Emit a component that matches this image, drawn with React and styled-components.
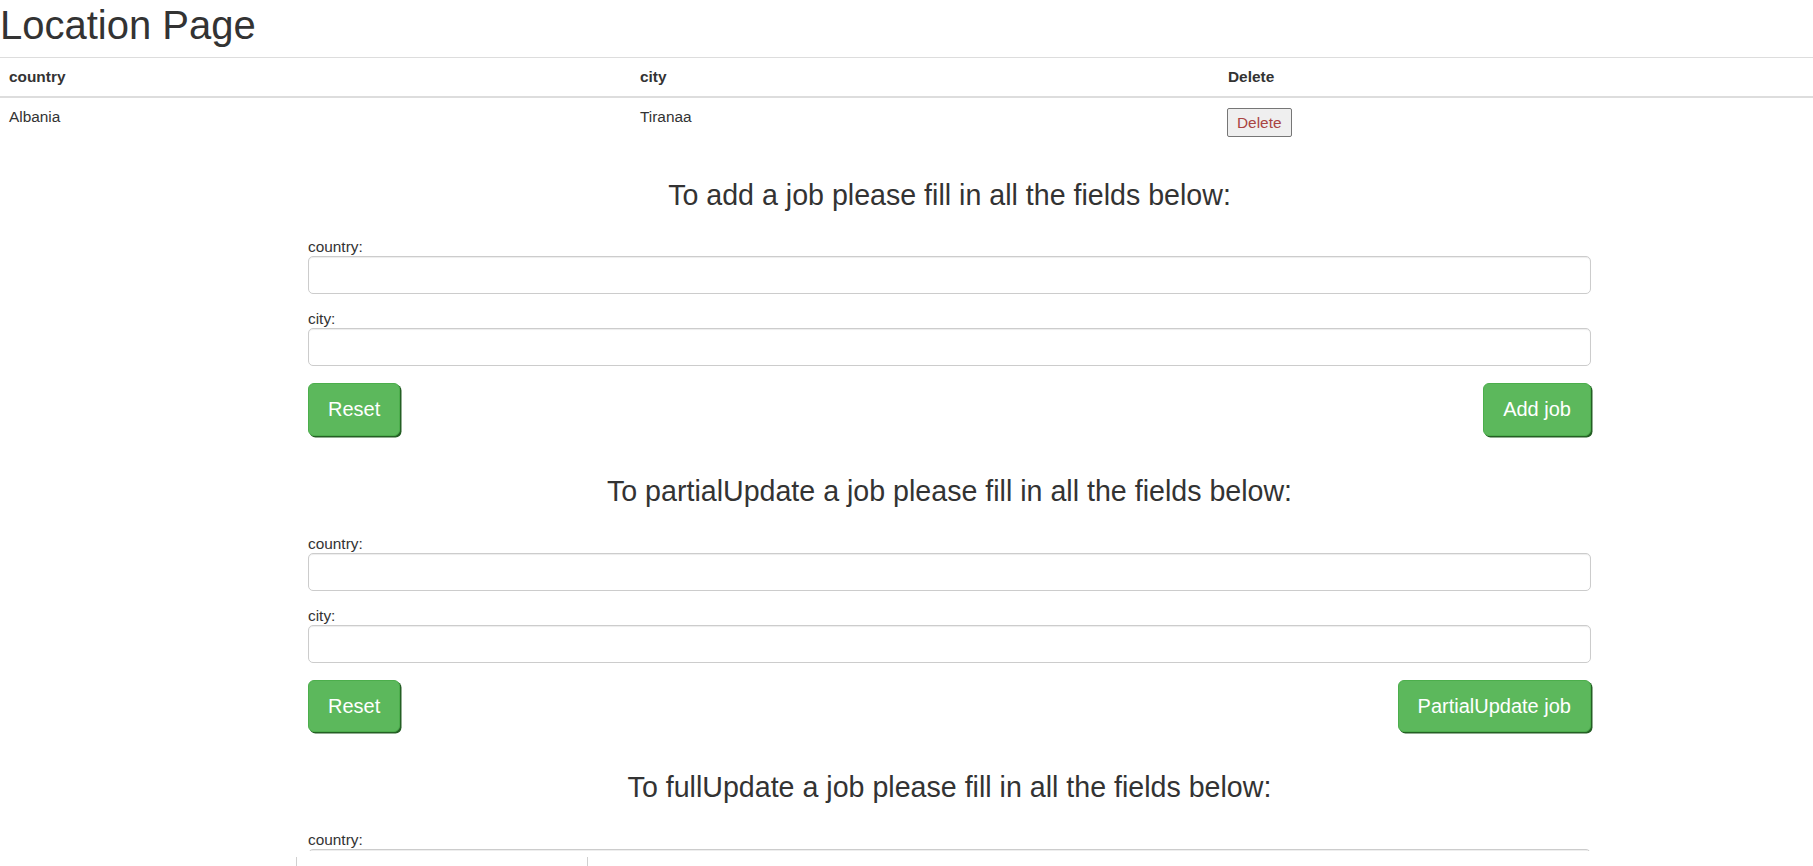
import React from "react";
import styled, { createGlobalStyle } from "styled-components";

const Global = createGlobalStyle`
  html, body { margin: 0; padding: 0; overflow: hidden; background: #fff; }
  body {
    font-family: "Liberation Sans", Arial, Helvetica, sans-serif;
    font-size: 15.4px;
    line-height: 1.42857;
    color: #333;
  }
  * { box-sizing: border-box; }
`;

const Page = styled.div`
  width: 100%;
`;

const Title = styled.h1`
  margin: 3px 0 10px;
  font-size: 40px;
  line-height: 1.1;
  font-weight: 500;
  color: #333;
`;

const Table = styled.table`
  width: 100%;
  border-collapse: collapse;
  border-spacing: 0;
`;

const HeadCell = styled.th`
  text-align: left;
  font-weight: bold;
  padding: 8px 8px 8px 9px;
  line-height: 22px;
  border-top: 1px solid #ddd;
  border-bottom: 2px solid #ddd;
  width: ${(p) => p.$w || "auto"};
`;

const Cell = styled.td`
  padding: 8px 8px 8px 9px;
  line-height: 22px;
  vertical-align: top;
`;

const DeleteButton = styled.button`
  font-family: "Liberation Sans", Arial, sans-serif;
  font-size: 15.4px;
  line-height: 21px;
  color: #a94442;
  background: #efefef;
  border: 1px solid #767676;
  border-radius: 2px;
  padding: 3px 9px;
  margin: 2px 0 0 -1px;
  cursor: pointer;
`;

const Forms = styled.div`
  margin: 35px 0 0 308px;
  width: 1283px;
`;

const Section = styled.section`
  padding-bottom: 40px;
`;

const SectionTitle = styled.h3`
  margin: 0 0 27px;
  font-size: 28.6px;
  line-height: 1.1;
  font-weight: 500;
  text-align: center;
  color: #333;
`;

const Field = styled.div`
  position: relative;
  margin-bottom: ${(p) => (p.$last ? "17px" : "16px")};
`;

const Label = styled.label`
  display: block;
  font-size: 15.4px;
  line-height: normal;
  color: #333;
`;

const Input = styled.input`
  display: block;
  width: 100%;
  height: 38px;
  padding: 6px 12px;
  font-size: 15.4px;
  font-family: "Liberation Sans", Arial, sans-serif;
  color: #555;
  background: #fff;
  border: 1px solid #ccc;
  border-radius: 5px;
  box-shadow: inset 0 1px 1px rgba(0, 0, 0, 0.075);
  outline: none;
`;

const Buttons = styled.div`
  display: flex;
  justify-content: space-between;
  align-items: center;
`;

const GreenButton = styled.button`
  font-family: "Liberation Sans", Arial, sans-serif;
  font-size: 20px;
  line-height: 26.7px;
  color: #fff;
  background: #5cb85c;
  border: 1px solid #4cae4c;
  border-radius: 6px;
  padding: 12px 19px;
  box-shadow: 1.5px 1.5px 0 #245f24;
  cursor: pointer;
`;

const Overlay = styled.div`
  position: absolute;
  left: -12px;
  right: 0;
  top: calc(100% - 36px);
  height: 220px;
  background: #fff;
  padding-top: 6px;
`;

const OverlayGrid = styled.div`
  height: 100%;
  display: grid;
  grid-template-columns: 291px 1fr;
  border-left: 1px solid #d0d0d0;
`;

const OverlayCol = styled.div`
  border-right: ${(p) => (p.$divider ? "1px solid #d0d0d0" : "none")};
`;

const sections = [
  { verb: "add", action: "Add job" },
  { verb: "partialUpdate", action: "PartialUpdate job" },
  { verb: "fullUpdate", action: "FullUpdate job" },
];

export default function App() {
  return (
    <Page>
      <Global />
      <Title>Location Page</Title>
      <Table>
        <thead>
          <tr>
            <HeadCell $w="631px">country</HeadCell>
            <HeadCell $w="588px">city</HeadCell>
            <HeadCell>Delete</HeadCell>
          </tr>
        </thead>
        <tbody>
          <tr>
            <Cell>Albania</Cell>
            <Cell>Tiranaa</Cell>
            <Cell>
              <DeleteButton>Delete</DeleteButton>
            </Cell>
          </tr>
        </tbody>
      </Table>
      <Forms>
        {sections.map((s, i) => (
          <Section key={s.verb}>
            <SectionTitle>
              To {s.verb} a job please fill in all the fields below:
            </SectionTitle>
            <Field>
              <Label>country:</Label>
              <Input type="text" />
              {i === 2 && (
                <Overlay>
                  <OverlayGrid>
                    <OverlayCol $divider />
                    <OverlayCol />
                  </OverlayGrid>
                </Overlay>
              )}
            </Field>
            <Field $last>
              <Label>city:</Label>
              <Input type="text" />
            </Field>
            <Buttons>
              <GreenButton>Reset</GreenButton>
              <GreenButton>{s.action}</GreenButton>
            </Buttons>
          </Section>
        ))}
      </Forms>
    </Page>
  );
}
